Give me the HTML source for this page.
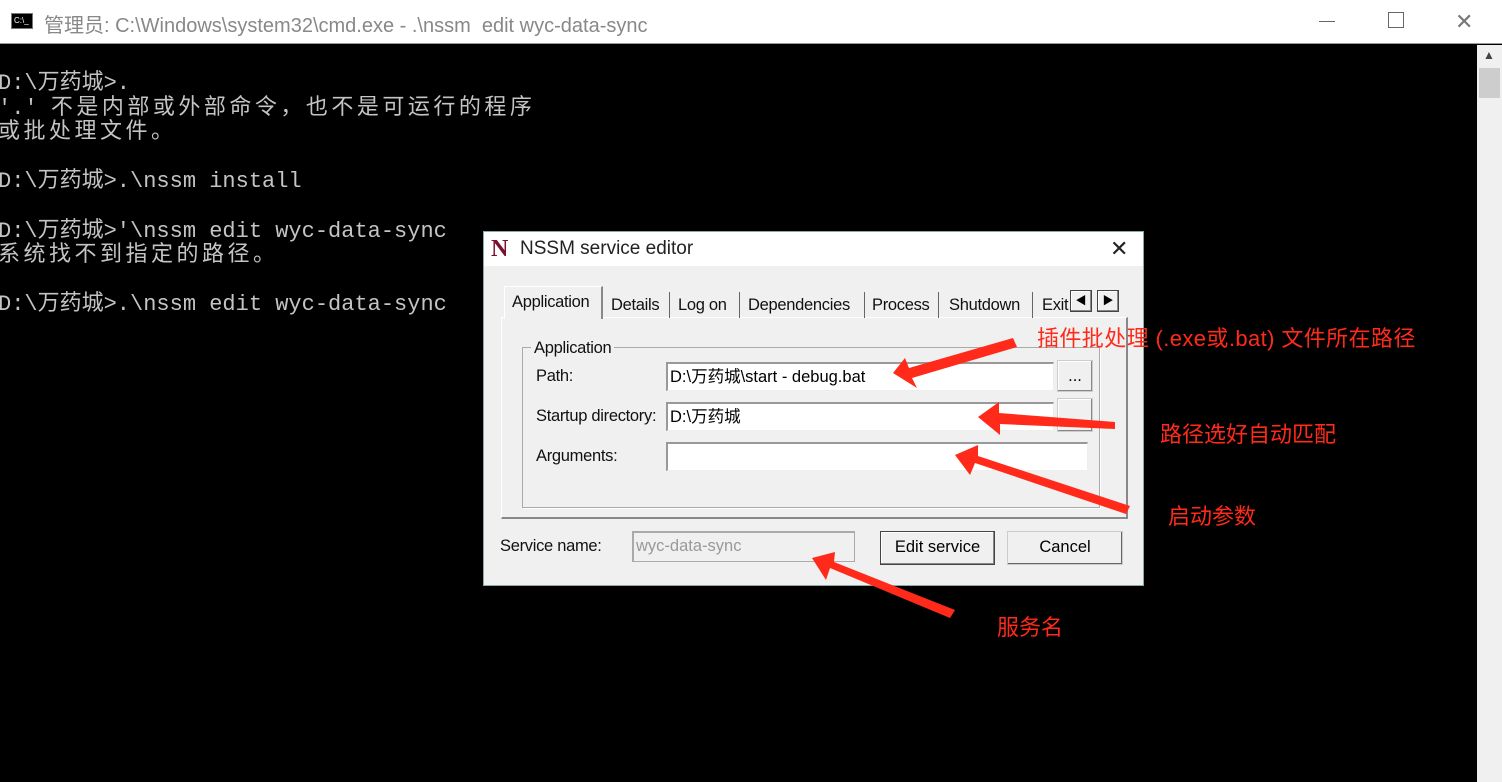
<!DOCTYPE html>
<html><head><meta charset="utf-8"><style>
*{margin:0;padding:0;box-sizing:border-box}
body{width:1502px;height:782px;background:#000;position:relative;overflow:hidden;font-family:"Liberation Sans","Noto Sans CJK SC",sans-serif}
.a{position:absolute}
#tb{left:0;top:0;width:1502px;height:44px;background:#fff;border-bottom:1px solid #999}
.con{color:#c4c4c4;font-family:"Liberation Mono","Noto Sans CJK SC",monospace;font-size:22px;line-height:24.6px;white-space:pre;left:-2px}
.con b{font-weight:normal;letter-spacing:3.5px}
.con i{font-style:normal}
.lbl{font-size:16.5px;color:#111;letter-spacing:-0.3px}
.inp{background:#fff;border-top:2px solid #999;border-left:2px solid #999;border-bottom:1px solid #eee;border-right:1px solid #eee;font-size:16.5px;padding:2px 2px;line-height:22px}
.btn{background:#f0f0f0;border:1px solid #444;box-shadow:inset -1px -1px #888,inset 1px 1px #fff;font-size:16.5px;text-align:center;line-height:30px}
.red{color:#ff2a1a;font-size:22px}
</style></head><body>
<div class="a" id="tb">
 <div class="a" style="left:11px;top:13px;width:22px;height:16px;background:#000;border:1px solid #777;color:#fff;font-size:8px;line-height:14px;padding-left:2px">C:\_</div>
 <div class="a" style="left:44px;top:9px;font-size:20px;color:#888">管理员: C:\Windows\system32\cmd.exe - .\nssm&nbsp; edit wyc-data-sync</div>
 <div class="a" style="left:1319px;top:21px;width:16px;height:1px;background:#666"></div>
 <div class="a" style="left:1388px;top:12px;width:16px;height:16px;border:1px solid #666"></div>
 <div class="a" style="left:1455px;top:9px;font-size:22px;color:#777">✕</div>
</div>
<div class="a" style="left:1477px;top:45px;width:25px;height:737px;background:#f0f0f0"></div>
<div class="a" style="left:1483px;top:48px;font-size:12px;color:#444">▲</div>
<div class="a" style="left:1479px;top:68px;width:21px;height:30px;background:#cdcdcd"></div>
<div class="a con" style="top:72px">D:\万药城&gt;.
'.' <b>不是内部或外部命令，也不是可运行的程序</b>
<b>或批处理文件。</b>

D:\万药城&gt;.\nssm install

D:\万药城&gt;'\nssm edit wyc-data-sync
<b>系统找不到指定的路径。</b>

D:\万药城&gt;.\nssm edit wyc-data-sync</div>

<div class="a" style="left:483px;top:231px;width:661px;height:355px;background:#f0f0f0;border:1px solid #8aa"></div>
<div class="a" style="left:484px;top:232px;width:659px;height:34px;background:#fff"></div>
<div class="a" style="left:491px;top:236px;font-family:'Liberation Serif',serif;font-weight:bold;font-size:24px;color:#7a1030">N</div>
<div class="a" style="left:520px;top:238px;font-size:19px;color:#222">NSSM service editor</div>
<div class="a" style="left:1110px;top:236px;font-size:22px;color:#222">✕</div>

<div class="a" style="left:501px;top:317px;width:627px;height:202px;border:1px solid #fff;border-right:2px solid #888;border-bottom:2px solid #888"></div>
<div class="a" style="left:504px;top:286px;width:99px;height:33px;background:#f0f0f0;border:1px solid #fff;border-right:2px solid #888;border-bottom:none"></div>
<div class="a lbl" style="left:512px;top:293px">Application</div>
<div class="a lbl" style="left:611px;top:296px">Details</div>
<div class="a" style="left:669px;top:292px;width:1px;height:26px;background:#666"></div>
<div class="a lbl" style="left:678px;top:296px">Log on</div>
<div class="a" style="left:739px;top:292px;width:1px;height:26px;background:#666"></div>
<div class="a lbl" style="left:748px;top:296px">Dependencies</div>
<div class="a" style="left:864px;top:292px;width:1px;height:26px;background:#666"></div>
<div class="a lbl" style="left:872px;top:296px">Process</div>
<div class="a" style="left:938px;top:292px;width:1px;height:26px;background:#666"></div>
<div class="a lbl" style="left:949px;top:296px">Shutdown</div>
<div class="a" style="left:1032px;top:292px;width:1px;height:26px;background:#666"></div>
<div class="a lbl" style="left:1042px;top:296px">Exit</div>
<div class="a btn" style="left:1070px;top:290px;width:22px;height:22px;line-height:20px;font-size:11px">◀</div>
<div class="a btn" style="left:1097px;top:290px;width:22px;height:22px;line-height:20px;font-size:11px">▶</div>

<div class="a" style="left:522px;top:347px;width:578px;height:161px;border:1px solid #aaa;box-shadow:1px 1px #fff"></div>
<div class="a lbl" style="left:531px;top:339px;background:#f0f0f0;padding:0 3px">Application</div>
<div class="a lbl" style="left:536px;top:367px">Path:</div>
<div class="a inp" style="left:666px;top:362px;width:388px;height:29px">D:\万药城\start - debug.bat</div>
<div class="a btn" style="left:1057px;top:360px;width:36px;height:32px;border-color:#ccc">...</div>
<div class="a lbl" style="left:536px;top:407px">Startup directory:</div>
<div class="a inp" style="left:666px;top:402px;width:388px;height:29px">D:\万药城</div>
<div class="a btn" style="left:1057px;top:398px;width:36px;height:34px;border-color:#ccc"></div>
<div class="a lbl" style="left:536px;top:447px">Arguments:</div>
<div class="a inp" style="left:666px;top:442px;width:422px;height:29px"></div>

<div class="a lbl" style="left:500px;top:537px">Service name:</div>
<div class="a inp" style="left:632px;top:531px;width:223px;height:31px;background:#f0f0f0;color:#999;border-color:#aaa">wyc-data-sync</div>
<div class="a btn" style="left:880px;top:531px;width:115px;height:34px">Edit service</div>
<div class="a btn" style="left:1007px;top:531px;width:116px;height:34px;border-color:#ccc;box-shadow:inset -1px -1px #666">Cancel</div>

<svg class="a" style="left:0;top:0" width="1502" height="782">
<g fill="#ff2a1a">
<polygon points="1013,338 1017,347 912,378 917,388 893,373 905,358 909,368"/>
<polygon points="1115,422 1115,429 1000,424 1000,435 978,417 999,402 999,413"/>
<polygon points="1130,506 1126,514 975,463 970,475 955,455 978,445 978,456"/>
<polygon points="955,610 950,618 830,568 826,580 812,558 835,552 834,562"/>
</g>
</svg>
<div class="a red" style="left:1037px;top:321px;letter-spacing:0.4px">插件批处理 (.exe或.bat) 文件所在路径</div>
<div class="a red" style="left:1160px;top:417px">路径选好自动匹配</div>
<div class="a red" style="left:1168px;top:499px">启动参数</div>
<div class="a red" style="left:997px;top:610px">服务名</div>
</body></html>
